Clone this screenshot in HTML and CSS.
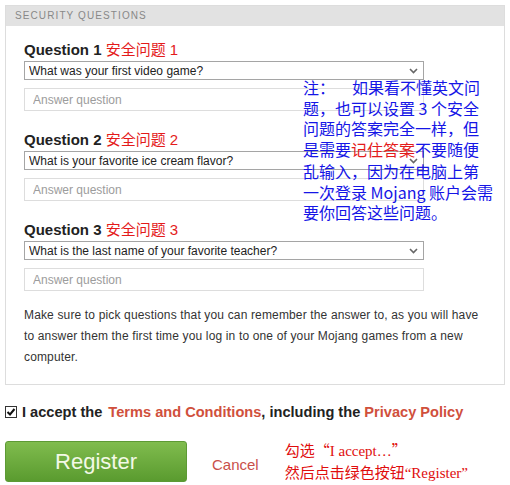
FILE: index.html
```html
<!DOCTYPE html>
<html lang="en">
<head>
    <meta charset="UTF-8">
    <title>Security Questions</title>
    <link rel="stylesheet" href="styles.css">
</head>
<body>
    <div class="panel">
        <div class="panel-header">Security Questions</div>
        <div class="panel-body">
            <div class="question">
                <label class="q-label">Question 1 <span class="cn-red">安全问题 1</span></label>
                <div class="select-wrap">
                    <select class="q-select">
                        <option>What was your first video game?</option>
                    </select>
                    <svg class="chevron" width="9" height="6" viewBox="0 0 9 6"><path d="M1 1l3.5 3.5L8 1" fill="none" stroke="#666" stroke-width="1.6"/></svg>
                </div>
                <input class="answer" type="text" placeholder="Answer question">
            </div>
            <div class="question">
                <label class="q-label">Question 2 <span class="cn-red">安全问题 2</span></label>
                <div class="select-wrap">
                    <select class="q-select">
                        <option>What is your favorite ice cream flavor?</option>
                    </select>
                    <svg class="chevron" width="9" height="6" viewBox="0 0 9 6"><path d="M1 1l3.5 3.5L8 1" fill="none" stroke="#666" stroke-width="1.6"/></svg>
                </div>
                <input class="answer" type="text" placeholder="Answer question">
            </div>
            <div class="question">
                <label class="q-label">Question 3 <span class="cn-red">安全问题 3</span></label>
                <div class="select-wrap">
                    <select class="q-select">
                        <option>What is the last name of your favorite teacher?</option>
                    </select>
                    <svg class="chevron" width="9" height="6" viewBox="0 0 9 6"><path d="M1 1l3.5 3.5L8 1" fill="none" stroke="#666" stroke-width="1.6"/></svg>
                </div>
                <input class="answer" type="text" placeholder="Answer question">
            </div>
            <p class="hint">Make sure to pick questions that you can remember the answer to, as you will have to answer them the first time you log in to one of your Mojang games from a new computer.</p>
        </div>

        <!-- translator's note pasted on top of the form -->
        <div class="note-blue">注：<span class="gap"></span>如果看不懂英文问<br>题，也可以设置 3 个安全<br>问题的答案完全一样，但<br>是需要<span class="cn-red">记住答案</span>不要随便<br>乱输入，因为在电脑上第<br>一次登录 Mojang 账户会需<br>要你回答这些问题。</div>
    </div>

    <div class="accept">
        <span class="checkbox">
            <svg width="10" height="10" viewBox="0 0 10 10"><path d="M1.5 5l2.5 2.5L8.5 2" fill="none" stroke="#111" stroke-width="2"/></svg>
        </span>
        <span>I accept the <a class="link first" href="#">Terms and Conditions</a>, including the <a class="link" href="#">Privacy Policy</a></span>
    </div>

    <div class="actions">
        <button class="register">Register</button>
        <a class="cancel" href="#">Cancel</a>
        <div class="note-red">勾选<span class="cjk-quote">“</span>I accept…<span class="cjk-quote">”</span><br>然后点击绿色按钮“Register”</div>
    </div>
</body>
</html>
```

FILE: styles.css
```css
body {
    margin: 0;
    padding: 5px;
    background-color: #fff;
    font-family: "Liberation Sans", Arial, sans-serif;
    color: #222;
}

.panel {
    position: relative;
    width: 498px;
    border: 1px solid #ddd;
}

.panel-header {
    height: 20px;
    line-height: 20px;
    padding-left: 9px;
    background-color: #e2e2e2;
    color: #888;
    font-size: 10px;
    letter-spacing: 1.1px;
    text-transform: uppercase;
}

.panel-body {
    padding: 15px 18px 16px;
}

.question {
    margin-bottom: 20px;
}

.question:last-of-type {
    margin-bottom: 0;
}

.q-label {
    display: block;
    height: 18px;
    line-height: 18px;
    margin-bottom: 2px;
    font-size: 15px;
    font-weight: bold;
    color: #222;
}

.cn-red {
    color: #e41b1b;
    font-weight: normal;
    font-family: "Liberation Sans", "Noto Sans CJK SC", sans-serif;
}

.select-wrap {
    position: relative;
    width: 400px;
}

.q-select {
    display: block;
    width: 400px;
    height: 19px;
    margin: 0;
    padding: 0 0 0 4px;
    border: 1px solid #a5a5a5;
    border-radius: 0;
    background: #fff;
    font-family: "Liberation Sans", Arial, sans-serif;
    font-size: 12px;
    color: #222;
    appearance: none;
    -webkit-appearance: none;
}

.chevron {
    position: absolute;
    right: 6px;
    top: 7px;
}

.answer {
    display: block;
    box-sizing: border-box;
    width: 400px;
    height: 23px;
    margin: 8px 0 0;
    padding: 0 8px;
    border: 1px solid #ddd;
    font-family: "Liberation Sans", Arial, sans-serif;
    font-size: 12px;
}

.answer::placeholder {
    color: #9c9c9c;
}

.hint {
    margin: 14px 0 0;
    font-size: 12px;
    line-height: 21px;
    letter-spacing: 0.15px;
    color: #333;
}

.note-blue {
    position: absolute;
    left: 297px;
    top: 71px;
    font-family: "Noto Sans CJK SC", sans-serif;
    font-size: 16px;
    line-height: 20.5px;
    color: #1515e6;
    white-space: nowrap;
}

.gap {
    display: inline-block;
    width: 17px;
}

.accept {
    display: flex;
    align-items: center;
    gap: 5px;
    margin-top: 17px;
    height: 20px;
    font-size: 14.6px;
    font-weight: bold;
    color: #222;
}

.checkbox {
    display: flex;
    align-items: center;
    justify-content: center;
    box-sizing: border-box;
    width: 12px;
    height: 12px;
    border: 1px solid #333;
    background: #fff;
}

.link {
    color: #d0503c;
    text-decoration: none;
}

.link.first {
    margin-left: 2px;
}

.actions {
    display: flex;
    align-items: flex-start;
    margin-top: 19px;
}

.register {
    width: 182px;
    height: 41px;
    padding: 0;
    border: 1px solid #5d9a35;
    border-radius: 3px;
    background: linear-gradient(#80bc4e, #5a9b2f);
    color: #f3f9e6;
    font-family: "Liberation Sans", Arial, sans-serif;
    font-size: 22px;
    cursor: pointer;
}

.cancel {
    margin-left: 25px;
    margin-top: 15px;
    font-size: 15px;
    line-height: 18px;
    color: #c9504a;
    text-decoration: none;
}

.note-red {
    margin-left: 26px;
    margin-top: -2px;
    font-family: "Liberation Serif", "Noto Sans CJK SC", serif;
    font-size: 15px;
    line-height: 22px;
    color: #e00d0d;
    white-space: nowrap;
}

.cjk-quote {
    font-family: "Noto Sans CJK SC", sans-serif;
}
```
